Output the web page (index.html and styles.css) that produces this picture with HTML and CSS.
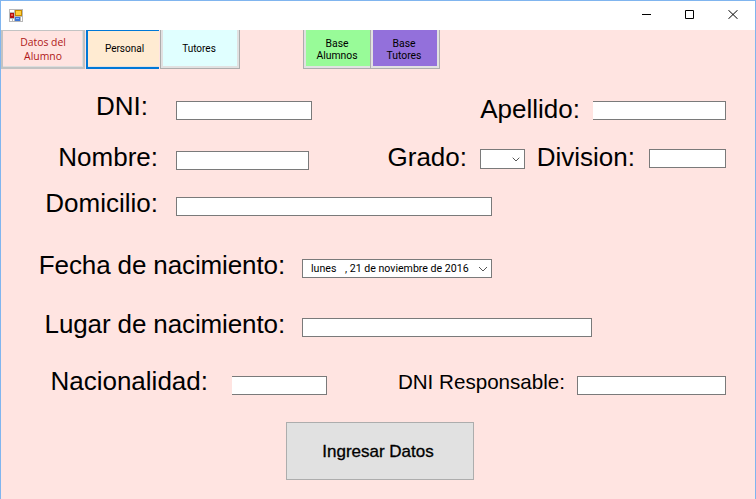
FILE: index.html
```
<!DOCTYPE html>
<html lang="es">
<head>
<meta charset="utf-8">
<title>Datos del Alumno</title>
<link rel="stylesheet" href="styles.css">
</head>
<body>
<div class="window">
  <header class="titlebar">
    <svg class="app-icon" width="14" height="13" viewBox="0 0 14 13" shape-rendering="crispEdges">
      <rect width="14" height="13" fill="#b8b8b8"/>
      <path d="M1 1h4v2H1zM1 10h2v2H1zM4 10h1v2H4zM12 8h1v4h-1z" fill="#fff"/>
      <rect x="1" y="4" width="4" height="5" fill="#b51212"/><rect x="2" y="5" width="2" height="2" fill="#ef5b4b"/>
      <rect x="6" y="1" width="7" height="6" fill="#c68a00"/><rect x="7" y="2" width="5" height="4" fill="#ffcf3a"/>
      <rect x="6" y="8" width="5" height="4" fill="#3d75d6"/><rect x="7" y="9" width="3" height="1" fill="#8db8ff"/>
    </svg>
    <svg class="ctl" width="9" height="9" viewBox="0 0 9 9"><path d="M0 4.5h9" stroke="#000"/></svg>
    <svg class="ctl" width="9" height="9" viewBox="0 0 9 9"><path d="M.5 .5h8v8h-8z" fill="none" stroke="#000"/></svg>
    <svg class="ctl" width="10" height="9" viewBox="0 0 10 9"><path d="M.3 0l9.4 9M9.7 0L.3 9" stroke="#000"/></svg>
  </header>
  <nav class="tabs">
    <button class="tab current">Datos del<br>Alumno</button>
    <button class="tab personal">Personal</button>
    <button class="tab tutores">Tutores</button>
    <button class="tab alumnos">Base<br>Alumnos</button>
    <button class="tab base-tutores">Base<br>Tutores</button>
  </nav>
  <main class="form">
    <div class="row row-dni">
      <label class="dni">DNI:</label><span class="field f-dni"></span>
      <label class="apellido">Apellido:</label><span class="field open f-apellido"></span>
    </div>
    <div class="row row-nombre">
      <label class="lead">Nombre:</label><span class="field f-nombre"></span>
      <label class="grado">Grado:</label>
      <span class="field f-grado"><svg width="8" height="5" viewBox="0 0 8 5"><path d="M.7 .7L4 4 7.3 .7" fill="none" stroke="#555"/></svg></span>
      <label class="division">Division:</label><span class="field f-division"></span>
    </div>
    <div class="row row-domicilio"><label class="lead">Domicilio:</label><span class="field f-domicilio"></span></div>
    <div class="row row-fecha"><label class="long">Fecha de nacimiento:</label>
      <span class="field f-fecha"><span class="day">lunes</span><span class="date">, 21 de noviembre de 2016</span><svg width="10" height="6" viewBox="0 0 10 6"><path d="M1 1l4 4 4-4" fill="none" stroke="#555"/></svg></span>
    </div>
    <div class="row row-lugar"><label class="long">Lugar de nacimiento:</label><span class="field f-lugar"></span></div>
    <div class="row row-nac">
      <label class="nac">Nacionalidad:</label><span class="field open f-nac"></span>
      <label class="resp">DNI Responsable:</label><span class="field f-resp"></span>
    </div>
    <button class="submit">Ingresar Datos</button>
  </main>
</div>
</body>
</html>
```
FILE: styles.css
```
* { box-sizing: border-box; }
body { margin: 0; font-family: "Liberation Sans", sans-serif; color: #000; }
.window { width: 756px; height: 499px; overflow: hidden; background: #ffe4e1; border: 1px solid #80b5ef; border-bottom: 0; }
.titlebar { height: 29px; background: #fff; display: flex; align-items: center; padding: 0 17px 2px 8px; gap: 34px; }
.app-icon { margin: 1px auto 0 0; }
.ctl { flex: none; }

.tabs { height: 39px; display: flex; }
.tab { height: 39px; padding: 0; border: 1px solid #adadad; border-top: 0; box-shadow: inset 2px 0 #e1e1e1, inset -2px -2px #e1e1e1; font: 10.4px/12px Roboto, sans-serif; color: #000; white-space: nowrap; }
.current { width: 84px; border: 2px solid #c3c3c3; border-top-width: 1px; box-shadow: inset -1px -1px #ddd; background: #ffe4e1; color: #b01818; font: 10.4px/14px "Open Sans", sans-serif; }
.personal { width: 73px; margin-left: 1px; padding-left: 2px; border: 2px solid #0078d7; border-top-width: 1px; border-right: 0; box-shadow: inset 0 -1px #e1e1e1; background: #ffebd2; font-size: 10px; }
.tutores { width: 80px; margin-left: 1px; padding-right: 2px; background: #e0ffff; font-size: 10px; }
.alumnos { width: 67px; margin-left: 63px; border-right: 0; box-shadow: inset 2px 0 #e1e1e1, inset 0 -2px #e1e1e1; background: #98fb98; padding-top: 1px; }
.base-tutores { width: 70px; background: #9370db; padding: 1px 2px 0 0; }

.form { padding-top: 21px; }
.row { display: flex; align-items: flex-start; }
.row-dni { height: 50px; }
.row-nombre { height: 47px; }
.row-domicilio { height: 60px; }
.row-fecha, .row-lugar { height: 59px; }
.row-nac { height: 56px; }
label { flex: none; font-size: 26px; line-height: 30px; text-align: right; white-space: nowrap; }
.dni { width: 147px; margin: 1px 28px 0 0; }
.apellido { width: 109px; margin: 4px 13px 0 159px; }
.lead { width: 157px; margin-right: 18px; }
.row-nombre label { margin-top: 2px; }
.row-domicilio label { margin-top: 1px; }
.grado { width: 88px; margin-left: 70px; margin-right: 13px; }
.division { width: 110px; margin-right: 14px; }
.long { width: 284px; margin: 3px 17px 0 0; letter-spacing: -.12px; }
.row-lugar .long { margin-top: 3px; }
.nac { width: 207px; margin: 1px 24px 0 0; }
.resp { width: 178px; margin: 2px 12px 0 60px; font-size: 20.6px; }

.field { flex: none; height: 19px; margin-top: 11px; background: #fff; border: 1px solid #7a7a7a; display: flex; align-items: center; }
.open { border-left: 0; }
.f-dni { width: 136px; }
.f-apellido { width: 133px; }
.f-nombre { width: 133px; }
.f-grado { width: 45px; height: 20px; margin-top: 9px; justify-content: flex-end; padding-right: 4px; }
.f-division { width: 77px; margin-top: 9px; }
.f-domicilio { width: 316px; margin-top: 10px; }
.f-fecha { width: 190px; margin-top: 12px; padding: 0 3px 0 8px; font: 10.6px/17px Roboto, sans-serif; white-space: pre; }
.day { width: 34px; }
.f-fecha svg { margin-left: auto; }
.f-lugar { width: 290px; margin-top: 12px; }
.f-nac { width: 95px; margin-top: 11px; }
.f-resp { width: 149px; margin-top: 11px; }
.submit { display: block; width: 188px; height: 58px; margin: 1px 0 0 285px; padding: 2px 4px 0 0; border: 1px solid #adadad; background: #e1e1e1; color: #000; font: 17px "Liberation Sans", sans-serif; -webkit-text-stroke: .3px #000; }
```
